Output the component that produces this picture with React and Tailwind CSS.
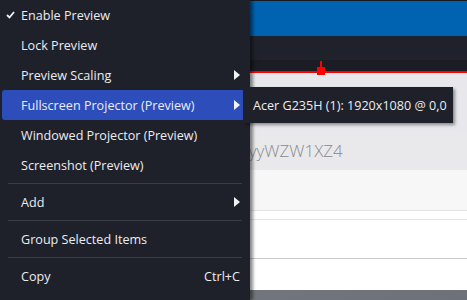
import React from "react";

const font = { fontFamily: '"Open Sans", "Noto Sans", sans-serif' };

function Arrow() {
  return (
    <svg width="6" height="10" viewBox="0 0 6 10" className="absolute right-[8px] top-1/2 -translate-y-1/2">
      <path d="M0 0 L6 5 L0 10 Z" fill="#f2f2f5" />
    </svg>
  );
}

function Item({ label, checked, arrow, active, shortcut }) {
  return (
    <div
      className={`relative h-[30px] flex items-center pl-[19px] pr-[8px] text-[12.6px] rounded-[3px] mx-[2px] ${
        active ? "bg-[#2d4dbb]" : ""
      }`}
    >
      {checked && (
        <svg width="9" height="8" viewBox="0 0 9 8" className="absolute left-[4px] top-[11px]">
          <path d="M1 4 L3.5 6.5 L8 1" stroke="#f2f2f5" strokeWidth="1.8" fill="none" />
        </svg>
      )}
      <span className="text-[#ececf0] translate-y-[1px]">{label}</span>
      {shortcut && <span className="ml-auto text-[#ececf0] translate-y-[1px]">{shortcut}</span>}
      {arrow && <Arrow />}
    </div>
  );
}

function Sep() {
  return (
    <div className="h-[7px] flex items-center px-[8px]">
      <div className="h-px w-full bg-[#3a3c47]" />
    </div>
  );
}

export default function App() {
  return (
    <div className="relative w-[467px] h-[300px] overflow-hidden bg-white" style={font}>
      {/* app behind the menu */}
      <div className="flex flex-col w-full">
        <div className="h-px bg-[#1a1b22]" />
        <div className="h-[35px] bg-[#0063b1]" />
        <div className="h-[24px] bg-[#1f222b]" />
        <div className="relative h-[11px] bg-[#1b1c24]">
          <div className="absolute left-[320px] top-[1px] w-[2px] h-[8px] bg-[#ff0000]" />
          <div className="absolute left-[317px] top-[7px] w-[8px] h-[8px] bg-[#ff0000] z-10" />
        </div>
        <div className="h-[2px] bg-[#ff0000]" />
        <div className="h-[58px] bg-[#e8e8ec]" />
        <div className="h-[39px] bg-[#e9e9eb] flex items-center pl-[239px] text-[17px] font-light text-[#8a8a8e]">
          5yyWZW1XZ4
        </div>
        <div className="h-[40px] bg-[#f7f7f8]" />
        <div className="h-px bg-[#e2e2e4]" />
        <div className="h-[8px] bg-white" />
        <div className="h-px bg-[#e6e6e8]" />
        <div className="h-[38px] bg-white" />
        <div className="h-px bg-[#c9c9cb]" />
        <div className="h-[31px] bg-white" />
        <div className="h-[10px] bg-gradient-to-r from-[#767b80] to-[#6c7278]" />
      </div>

      {/* context menu */}
      <div className="absolute left-0 top-0 w-[250px] h-[300px] bg-[#1f212a] shadow-[3px_0_3px_rgba(0,0,0,0.45)] z-20">
        <Item label="Enable Preview" checked />
        <Item label="Lock Preview" />
        <Item label="Preview Scaling" arrow />
        <Item label="Fullscreen Projector (Preview)" arrow active />
        <Item label="Windowed Projector (Preview)" />
        <Item label="Screenshot (Preview)" />
        <Sep />
        <Item label="Add" arrow />
        <Sep />
        <Item label="Group Selected Items" />
        <Sep />
        <Item label="Copy" shortcut="Ctrl+C" />
      </div>

      {/* submenu */}
      <div className="absolute left-[243px] top-[87px] w-[210px] h-[36px] bg-[#1f212a] shadow-[2px_2px_3px_rgba(0,0,0,0.4)] z-30 flex items-center pl-[10px] text-[12.6px] text-[#ececf0]">
        <span className="translate-y-[1px]">Acer G235H (1): 1920x1080 @ 0,0</span>
      </div>
    </div>
  );
}
